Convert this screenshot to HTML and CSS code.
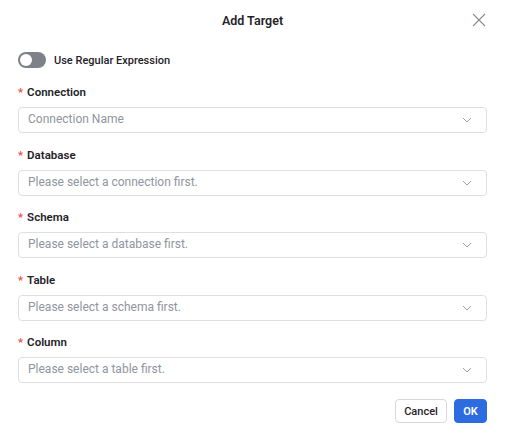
FILE: index.html
```html
<!DOCTYPE html>
<html>
<head>
<meta charset="utf-8">
<link rel="stylesheet" href="styles.css">
</head>
<body>
<div class="dialog">
  <div class="header">
    <div class="title">Add Target</div>
    <button class="close" aria-label="Close">
      <svg width="14" height="14" viewBox="0 0 14 14"><path d="M1 1L13 13M13 1L1 13" stroke="#8a8f99" stroke-width="1.2" fill="none"/></svg>
    </button>
  </div>
  <div class="body">
    <div class="switch-row">
      <span class="switch"><span class="knob"></span></span>
      <span class="switch-label">Use Regular Expression</span>
    </div>
    <div class="item">
      <label class="label"><span class="req">*</span>Connection</label>
      <div class="select"><span class="ph">Connection Name</span><svg class="chev" width="10" height="6" viewBox="0 0 10 6"><path d="M1 1L5 5L9 1" stroke="#9aa0a8" stroke-width="1" fill="none"/></svg></div>
    </div>
    <div class="item">
      <label class="label"><span class="req">*</span>Database</label>
      <div class="select"><span class="ph">Please select a connection first.</span><svg class="chev" width="10" height="6" viewBox="0 0 10 6"><path d="M1 1L5 5L9 1" stroke="#9aa0a8" stroke-width="1" fill="none"/></svg></div>
    </div>
    <div class="item">
      <label class="label"><span class="req">*</span>Schema</label>
      <div class="select"><span class="ph">Please select a database first.</span><svg class="chev" width="10" height="6" viewBox="0 0 10 6"><path d="M1 1L5 5L9 1" stroke="#9aa0a8" stroke-width="1" fill="none"/></svg></div>
    </div>
    <div class="item">
      <label class="label"><span class="req">*</span>Table</label>
      <div class="select"><span class="ph">Please select a schema first.</span><svg class="chev" width="10" height="6" viewBox="0 0 10 6"><path d="M1 1L5 5L9 1" stroke="#9aa0a8" stroke-width="1" fill="none"/></svg></div>
    </div>
    <div class="item last">
      <label class="label"><span class="req">*</span>Column</label>
      <div class="select"><span class="ph">Please select a table first.</span><svg class="chev" width="10" height="6" viewBox="0 0 10 6"><path d="M1 1L5 5L9 1" stroke="#9aa0a8" stroke-width="1" fill="none"/></svg></div>
    </div>
  </div>
  <div class="footer">
    <button class="btn cancel">Cancel</button>
    <button class="btn ok">OK</button>
  </div>
</div>
</body>
</html>
```
FILE: styles.css
```css
* { box-sizing: border-box; }
html, body { margin: 0; padding: 0; background: #fff; }
body { font-family: Roboto, "Noto Sans", sans-serif; color: #1f2329; }
.dialog { width: 505px; height: 436px; background: #fff; }
.header { height: 40px; display: flex; align-items: center; justify-content: center; position: relative; }
.title { font-size: 12.5px; font-weight: 600; color: #1f2329; }
.close { position: absolute; right: 19px; top: 13px; width: 14px; height: 14px; padding: 0; border: 0; background: none; display: flex; }
.body { padding: 0 18px; }
.switch-row { display: flex; align-items: center; height: 16px; margin-top: 12px; }
.switch { width: 28px; height: 16px; border-radius: 8px; background: #7e8187; position: relative; display: inline-block; }
.knob { position: absolute; left: 2px; top: 2px; width: 12px; height: 12px; border-radius: 50%; background: #fff; }
.switch-label { margin-left: 8px; font-size: 11px; font-weight: 500; color: #1f2329; }
.item { margin-top: 16px; }
.item + .item { margin-top: 13.5px; }
.label { display: flex; align-items: center; height: 16px; font-size: 11.5px; font-weight: 600; color: #1f2329; }
.req { color: #f04848; margin-right: 4px; font-weight: 500; }
.select { margin-top: 7px; height: 26px; border: 1px solid #dcdfe4; border-radius: 4px; display: flex; align-items: center; justify-content: space-between; padding: 0 14px 2px 9px; }
.ph { font-size: 12px; color: #8f959e; }
.chev { display: block; margin-top: 2px; }
.footer { display: flex; justify-content: flex-end; gap: 7px; padding: 16px 18px 0; }
.btn { height: 24px; border-radius: 4px; font-family: Roboto, "Noto Sans", sans-serif; font-size: 11px; font-weight: 500; padding: 0; }
.cancel { width: 52px; background: #fff; border: 1px solid #d5d8dd; color: #1f2329; }
.ok { width: 33px; background: #2d6be0; border: 1px solid #2d6be0; color: #fff; font-weight: 600; }
```
